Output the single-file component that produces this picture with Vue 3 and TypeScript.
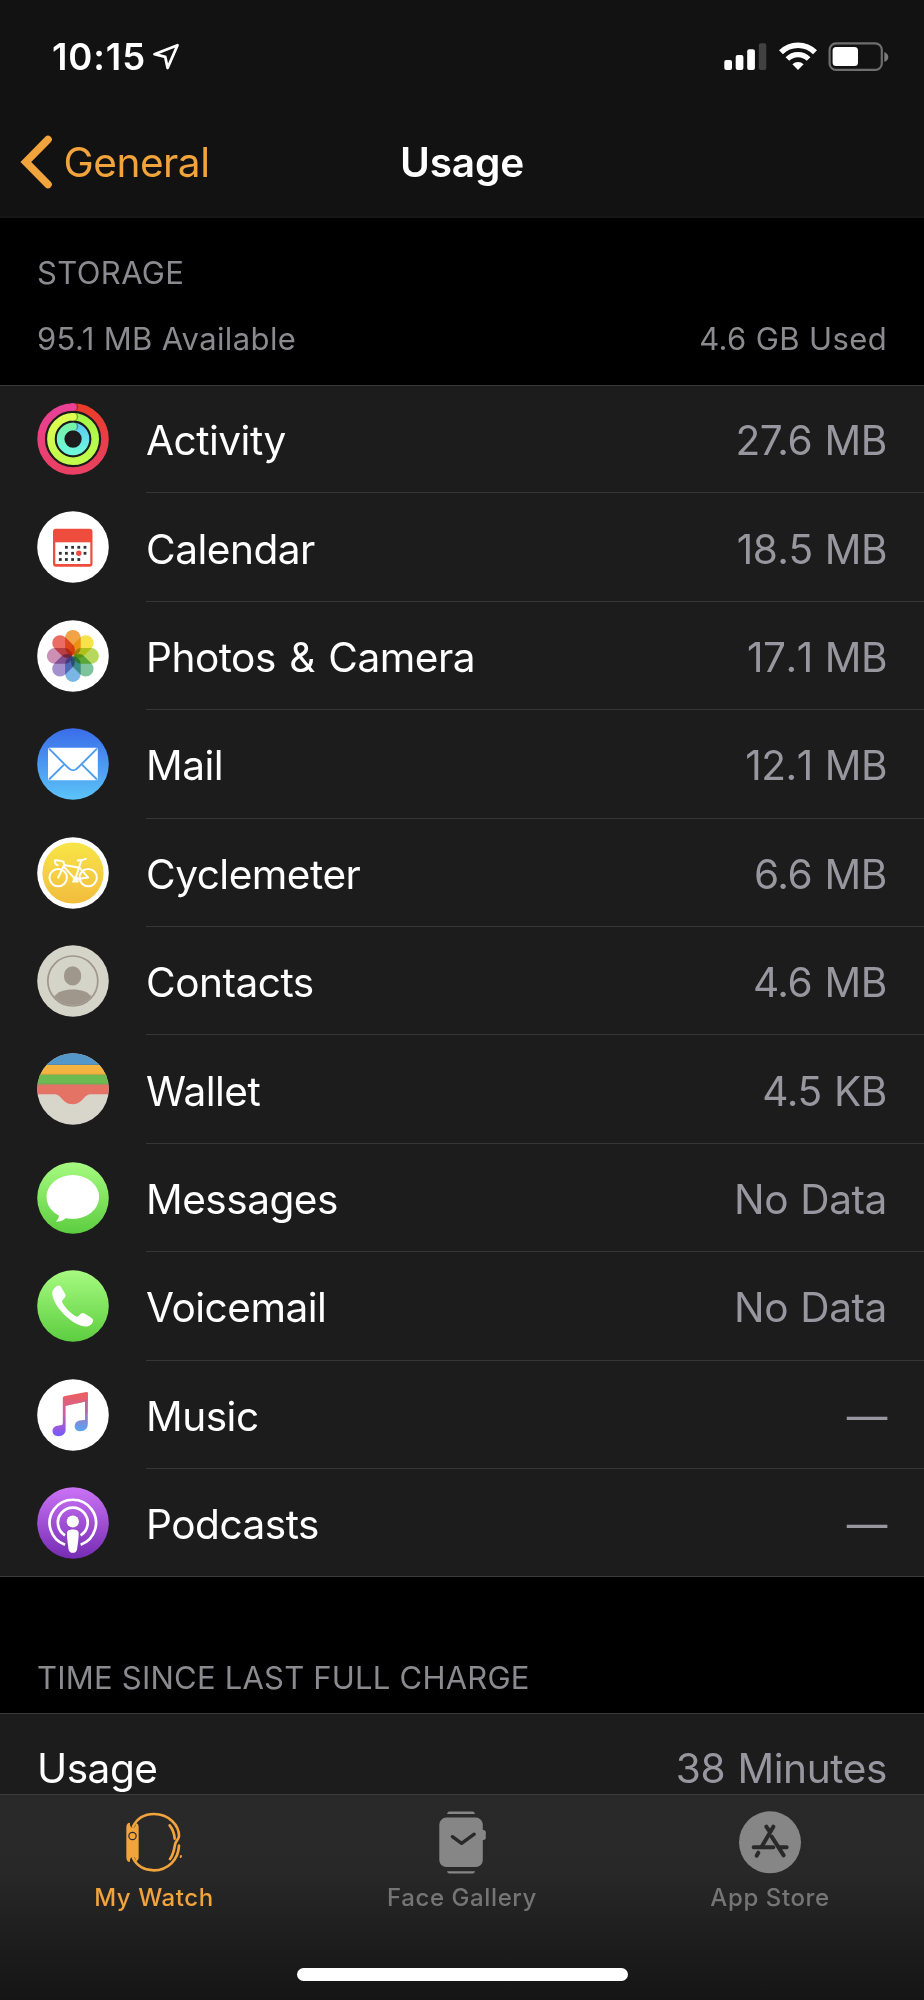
<template>
  <div class="screen">
    <header class="top">
      <div class="status-bar">
        <div class="clock">
          <span class="time">10:15</span>
          <svg class="location" width="28" height="28" viewBox="0 0 28 28">
            <path d="M25.5 2.2 2.5 11.2 13.2 13.8 15.6 25 25.5 2.2Z" />
          </svg>
        </div>
        <div class="indicators">
          <svg width="43" height="30" viewBox="0 0 43 30">
            <rect x="0.3" y="18" width="7.7" height="10" rx="2" fill="#fff" />
            <rect x="11.7" y="13" width="7.7" height="15" rx="2" fill="#fff" />
            <rect x="23.2" y="7.2" width="7.7" height="20.8" rx="2" fill="#fff" />
            <rect x="34.8" y="1.3" width="7.5" height="26.7" rx="2" fill="#414141" />
          </svg>
          <svg width="38" height="30" viewBox="0 0 38 30">
            <path d="M2 10.3A24 24 0 0 1 36 10.3" fill="none" stroke="#fff" stroke-width="5.6" />
            <path d="M8.4 17A14.9 14.9 0 0 1 29.6 17" fill="none" stroke="#fff" stroke-width="5.2" />
            <path d="M13.4 22.2A8 8 0 0 1 24.6 22.2L19 28Z" fill="#fff" />
          </svg>
          <svg width="62" height="30" viewBox="0 0 62 30">
            <rect x="1.6" y="1.3" width="52.2" height="26.6" rx="6.5" fill="none" stroke="#6e6e6e" stroke-width="2.2" />
            <rect x="4.6" y="5" width="25.4" height="19" rx="3.5" fill="#fff" />
            <path d="M56.3 10V20C59 19 60.3 17 60.3 15S59 11 56.3 10Z" fill="#7b7b7b" />
          </svg>
        </div>
      </div>
      <div class="nav-bar">
        <a class="back">
          <svg width="34" height="54" viewBox="0 0 34 54">
            <path d="M29 4.5 6.8 27 29 49.5" />
          </svg>
          <span>General</span>
        </a>
        <h1>Usage</h1>
        <div class="nav-side"></div>
      </div>
    </header>

    <main class="content">
      <div class="section-head">
        <div class="caption">STORAGE</div>
        <div class="totals">
          <span>95.1 MB Available</span>
          <span>4.6 GB Used</span>
        </div>
      </div>

      <ul class="list">
        <li v-for="app in apps" :key="app.id" class="row">
          <svg class="app-icon" viewBox="0 0 72 72">
            <defs>
              <linearGradient :id="`bg-${app.id}`" x1="0" y1="0" x2="0" y2="1">
                <stop offset="0" :stop-color="app.bg[0]" />
                <stop offset="1" :stop-color="app.bg[1]" />
              </linearGradient>
            </defs>
            <circle cx="36" cy="36" r="35.8" :fill="`url(#bg-${app.id})`" />

            <g v-if="app.id === 'activity'" fill="none" stroke-width="7.6">
              <template v-for="ring in rings" :key="ring.r">
                <linearGradient :id="`ring-a-${ring.r}`" gradientUnits="userSpaceOnUse" x1="0" :y1="36 - ring.r" x2="0" :y2="36 + ring.r">
                  <stop offset="0" :stop-color="ring.start" />
                  <stop offset="1" :stop-color="ring.mid" />
                </linearGradient>
                <linearGradient :id="`ring-b-${ring.r}`" gradientUnits="userSpaceOnUse" x1="0" :y1="36 - ring.r" x2="0" :y2="36 + ring.r">
                  <stop offset="0" :stop-color="ring.end" />
                  <stop offset="1" :stop-color="ring.mid" />
                </linearGradient>
                <path :d="`M36 ${36 - ring.r}A${ring.r} ${ring.r} 0 0 1 36 ${36 + ring.r}`" :stroke="`url(#ring-a-${ring.r})`" />
                <circle cx="37.6" :cy="36 - ring.r" r="3.6" fill="#000" fill-opacity="0.3" />
                <path :d="`M36.2 ${36 + ring.r}A${ring.r} ${ring.r} 0 0 1 36 ${36 - ring.r}`" :stroke="`url(#ring-b-${ring.r})`" />
                <circle cx="36" :cy="36 - ring.r" r="3.8" :fill="ring.end" />
              </template>
            </g>

            <g v-else-if="app.id === 'calendar'">
              <rect x="16" y="17.7" width="39.5" height="38" rx="3" fill="#ee4d3d" />
              <rect x="18.3" y="31.3" width="35" height="21.7" fill="#fff" />
              <rect v-for="(d, i) in calendarDots" :key="i" :x="d[0] - 1.4" :y="d[1] - 1.4" width="2.8" height="2.8" fill="#333" />
              <circle cx="41.8" cy="42.3" r="2.7" fill="#ee4d3d" />
            </g>

            <g v-else-if="app.id === 'photos'" class="petals">
              <rect
                v-for="(color, i) in petals"
                :key="color"
                x="28.1"
                y="9.9"
                width="15.6"
                height="25.6"
                rx="7.8"
                :fill="color"
                :transform="`rotate(${i * 45} 35.9 35.9)`"
              />
            </g>

            <g v-else-if="app.id === 'mail'">
              <rect x="11" y="19.7" width="49.8" height="32.5" rx="1.5" fill="#fff" />
              <path
                d="M12 20.7 30.5 39.2C34 43.4 38 43.4 41.5 39.2L60 20.7M12 51.5 26.8 36.8M60 51.5 45.2 36.8"
                fill="none"
                stroke="#4c9df0"
                stroke-width="1.9"
              />
            </g>

            <g v-else-if="app.id === 'cyclemeter'" fill="none" stroke="#fff" stroke-width="2" stroke-linecap="round" stroke-linejoin="round">
              <linearGradient id="cycle-fill" x1="0" y1="0" x2="0" y2="1">
                <stop offset="0" stop-color="#f8e548" />
                <stop offset="1" stop-color="#f2bc3d" />
              </linearGradient>
              <circle cx="36" cy="36" r="30.6" fill="url(#cycle-fill)" stroke="none" />
              <circle cx="21.2" cy="40.6" r="8.7" />
              <circle cx="51.2" cy="40.6" r="8.7" />
              <path d="M21.2 40.6 27.2 28 26.4 24.5C24 24.6 22 22.8 18.5 23.2 17 24 18.5 28 20.6 28.2" />
              <path d="M27.2 28 42.6 30.8M26.8 29.6 38.2 42.2 51.2 40.6 42.6 30.8" />
              <path d="M38.2 42.2 44.4 23.2M40.8 23.5C43 22.6 45.5 23.4 48.8 21.9M36 44.6H41" />
              <circle cx="38.6" cy="42" r="2.2" stroke-width="1.2" />
            </g>

            <g v-else-if="app.id === 'contacts'" fill="#9f968c">
              <circle cx="35.8" cy="36" r="25" fill="none" stroke="#9f968c" stroke-width="1.7" />
              <ellipse cx="35.6" cy="30.9" rx="8.7" ry="9.6" />
              <path d="M17.2 51.8C22.5 42 49 42 54.4 51.8A25 25 0 0 1 17.2 51.8Z" />
            </g>

            <g v-else-if="app.id === 'wallet'">
              <clipPath id="wallet-clip"><circle cx="36" cy="36" r="35.8" /></clipPath>
              <g clip-path="url(#wallet-clip)">
                <rect width="72" height="12" fill="#5498c9" />
                <rect y="11.9" width="72" height="10" fill="#f5b441" />
                <rect y="21.7" width="72" height="10" fill="#6dba51" />
                <path d="M0 31.5H72V41.3H54C46 41.3 46.5 51.2 35.6 51.2 24.7 51.2 25.2 41.3 17.2 41.3H0Z" fill="#e47365" />
                <path d="M0 21.3H72M0 31.1H72M0 11.5H72" stroke="#000" stroke-opacity="0.1" />
              </g>
            </g>

            <g v-else-if="app.id === 'messages'" fill="#fff">
              <ellipse cx="35.8" cy="35" rx="26.3" ry="21.9" />
              <path d="M21.5 51C22.5 54.5 21.5 57.5 18.8 59.4 23.5 60 27.5 57.8 30 55Z" />
            </g>

            <path
              v-else-if="app.id === 'voicemail'"
              d="M15.2 23.5C15 19.6 19 16 22 15.6 23.4 15.6 24 16.8 28.4 24.6 29.8 27.8 24.2 29.6 25.2 32.2 28 37.6 34.2 43.8 39.4 46.6 42 47.4 43.4 41.6 47 43.2 54.4 47.6 56.2 48.8 56.2 50.4 55.8 53.6 52.6 56.6 48.6 56.5 36.5 56.5 16 36.5 15.2 23.5Z"
              fill="#fff"
            />

            <g v-else-if="app.id === 'music'">
              <linearGradient id="note-l" gradientUnits="userSpaceOnUse" x1="26" y1="16" x2="26" y2="56">
                <stop offset="0" stop-color="#ea5f62" />
                <stop offset="0.45" stop-color="#cc62a4" />
                <stop offset="1" stop-color="#7a58fb" />
              </linearGradient>
              <linearGradient id="note-r" gradientUnits="userSpaceOnUse" x1="45" y1="13" x2="45" y2="52">
                <stop offset="0" stop-color="#e35c6c" />
                <stop offset="0.4" stop-color="#b667b4" />
                <stop offset="1" stop-color="#5aa4f2" />
              </linearGradient>
              <path d="M48 22.5V40.9C39.5 40.6 37.7 44.3 37.7 47.2 37.7 50.4 40.2 52.2 43.3 52.2 48 52.2 50.8 49.6 50.8 44.8V13.8L40 15.8V24.4Z" fill="url(#note-r)" />
              <path d="M28.6 27V51C28.6 54.6 25.4 57.2 21.5 57.2 18 57.2 15.5 55.2 15.5 52 15.5 48.8 18 46.6 22 46.4 24.2 46.2 25.8 46.4 25.8 43.8V19.4C25.8 18 26.6 17.4 28 17.1L49.4 13.1C50.3 12.9 50.8 13.2 50.8 14V22L28.6 27Z" fill="url(#note-l)" />
              <path d="M48 22.4V34H50.8V20Z" fill="#c063a0" fill-opacity="0.5" />
            </g>

            <g v-else-if="app.id === 'podcasts'" fill="none" stroke="#fff" stroke-width="2.7">
              <path d="M28 57.8A23.2 23.2 0 1 1 43.6 57.8" />
              <path d="M28 48.3A14.9 14.9 0 1 1 43.6 48.3" />
              <circle cx="35.8" cy="34.5" r="6.1" fill="#fff" stroke="none" />
              <path d="M30 46.2C30 43.6 32.4 42.6 35.8 42.6S41.7 43.6 41.7 46.2C41.7 51 40.8 57.5 40 62.5 39.6 65 38 65.8 35.8 65.8S32 65 31.6 62.5C30.8 57.5 30 51 30 46.2Z" fill="#fff" stroke="none" />
            </g>
          </svg>
          <div class="row-body">
            <span class="name">{{ app.name }}</span>
            <span class="value" :class="{ loose: app.loose }">{{ app.size }}</span>
          </div>
        </li>
      </ul>

      <div class="section-head charge">
        <div class="caption">TIME SINCE LAST FULL CHARGE</div>
      </div>
      <ul class="list">
        <li class="row">
          <div class="row-body">
            <span class="name">Usage</span>
            <span class="value">38 Minutes</span>
          </div>
        </li>
      </ul>
    </main>

    <footer class="tab-bar">
      <div class="tabs">
        <div class="tab active">
          <svg width="62" height="65" viewBox="0 0 186 195">
            <path d="M10 52Q10 38 21 38C18 58 41 58 38 40Q47 40 47 52V142Q47 152 38 154C41 136 18 136 21 156Q10 156 10 142Z" fill="#f1a33c" />
            <circle cx="28.5" cy="78" r="11" fill="#f1a33c" stroke="#292929" stroke-width="3.4" />
            <g fill="none" stroke="#f1a33c" stroke-width="8" stroke-linecap="round">
              <path d="M30 50C42 25 66 12 93 12 138 12 168 46 168 78 168 88 158 92 156 104 153 122 151 134 141 147" />
              <path d="M30 144C42 168 66 181 93 181 134 181 166 150 168 107" />
              <path d="M140 46C148 56 154 70 155 86" />
              <path d="M173 141 174 138" stroke-width="6" />
            </g>
          </svg>
          <span>My Watch</span>
        </div>
        <div class="tab">
          <svg width="50" height="65" viewBox="0 0 50 65">
            <g fill="#868686">
              <path d="M10 3.9C10.6 2 11.5 1.6 13 1.6H35C36.5 1.6 37.4 2 38 3.9Z" />
              <path d="M10 61.2C10.6 63.1 11.5 63.5 13 63.5H35C36.5 63.5 37.4 63.1 38 61.2Z" />
              <rect x="2.3" y="7.6" width="43.5" height="49.5" rx="7" />
              <rect x="42" y="20" width="6.8" height="10" rx="2.5" />
            </g>
            <path d="M15.4 26.7 24.6 33.3 37.2 24.2" fill="none" stroke="#292929" stroke-width="3.4" stroke-linecap="round" stroke-linejoin="round" />
          </svg>
          <span>Face Gallery</span>
        </div>
        <div class="tab">
          <svg width="62" height="65" viewBox="0 -4 186 195">
            <circle cx="93" cy="93" r="93" fill="#868686" />
            <g fill="none" stroke="#292929" stroke-width="12" stroke-linecap="round">
              <path d="M103 46 68 106M82 46 90 58" />
              <path d="M98 76 134 132" />
              <path d="M44 108H103M124 108H143" />
              <path d="M58 124 53 133" />
            </g>
          </svg>
          <span>App Store</span>
        </div>
      </div>
      <div class="home-indicator"></div>
    </footer>
  </div>
</template>

<script setup lang="ts">
interface AppUsage {
  id: string
  name: string
  size: string
  bg: [string, string]
  // no kerning around narrow "1" digits
  loose?: boolean
}

const apps: AppUsage[] = [
  { id: 'activity', name: 'Activity', size: '27.6 MB', bg: ['#1c1c1c', '#1c1c1c'] },
  { id: 'calendar', name: 'Calendar', size: '18.5 MB', bg: ['#ffffff', '#ffffff'], loose: true },
  { id: 'photos', name: 'Photos & Camera', size: '17.1 MB', bg: ['#ffffff', '#ffffff'], loose: true },
  { id: 'mail', name: 'Mail', size: '12.1 MB', bg: ['#3a6cea', '#5cc4f8'], loose: true },
  { id: 'cyclemeter', name: 'Cyclemeter', size: '6.6 MB', bg: ['#ffffff', '#ffffff'] },
  { id: 'contacts', name: 'Contacts', size: '4.6 MB', bg: ['#d5d4c8', '#d5d4c8'] },
  { id: 'wallet', name: 'Wallet', size: '4.5 KB', bg: ['#d8d5cb', '#d8d5cb'] },
  { id: 'messages', name: 'Messages', size: 'No Data', bg: ['#a6fb80', '#5dcd40'] },
  { id: 'voicemail', name: 'Voicemail', size: 'No Data', bg: ['#a6fb80', '#5dcd40'] },
  { id: 'music', name: 'Music', size: '—', bg: ['#ffffff', '#ffffff'] },
  { id: 'podcasts', name: 'Podcasts', size: '—', bg: ['#cb73f6', '#752cb3'] },
]

const rings = [
  { r: 32, start: '#ea3c2a', mid: '#ea4064', end: '#ea4096' },
  { r: 22.2, start: '#a6f848', mid: '#c2fb4c', end: '#e0fd50' },
  { r: 12.5, start: '#5bcdf2', mid: '#6ff8dc', end: '#74f4a8' },
]

// clockwise from the top
const petals = ['#f2a345', '#f6e24b', '#b7d85c', '#7dc39b', '#79b6e4', '#a390cc', '#cc90b6', '#e96d62']

const calendarDots = [
  [29.4, 36.3], [35.6, 36.3], [41.8, 36.3], [48, 36.3],
  [23.3, 42.3], [29.4, 42.3], [35.6, 42.3], [48, 42.3],
  [23.3, 48.5], [29.4, 48.5], [35.6, 48.5], [41.8, 48.5],
]
</script>

<style>
body {
  margin: 0;
  background: #000;
}
</style>

<style scoped>
.screen {
  width: 924px;
  height: 2000px;
  display: flex;
  flex-direction: column;
  overflow: hidden;
  background: #000;
  color: #fff;
  font-family: Inter, 'Liberation Sans', sans-serif;
  font-size: 40.6px;
}
svg {
  display: block;
  flex: none;
}

/* ===== header ===== */
.top {
  flex: none;
  height: 216px;
  background: #121212;
  border-bottom: 2px solid #161616;
}
.status-bar {
  display: flex;
  justify-content: space-between;
  align-items: center;
  height: 113px;
  padding: 0 34px 0 52px;
}
.clock {
  display: flex;
  align-items: center;
  gap: 6px;
}
.time {
  font-size: 36.5px;
  font-weight: 600;
  letter-spacing: 0.9px;
}
.location path {
  fill: none;
  stroke: #fff;
  stroke-width: 2.8;
  stroke-linejoin: round;
}
.indicators {
  display: flex;
  gap: 11.5px;
}
.nav-bar {
  display: flex;
  align-items: center;
  height: 98px;
  padding: 0 19px;
}
.back,
.nav-side {
  flex: 1;
}
.back {
  display: flex;
  align-items: center;
  gap: 10.5px;
  color: #f1a33c;
  letter-spacing: -0.5px;
}
.back path {
  fill: none;
  stroke: #f1a33c;
  stroke-width: 7.6;
  stroke-linecap: round;
}
h1 {
  margin: 0;
  font-size: 40.6px;
  font-weight: 600;
  letter-spacing: -0.15px;
}

/* ===== lists ===== */
.content {
  flex: 1;
  min-height: 0;
  overflow: hidden;
}
.section-head {
  padding: 35px 37px 26px;
  font-size: 31px;
  line-height: 40px;
  letter-spacing: 0.38px;
  color: #8a8a8f;
}
.section-head.charge {
  padding: 81px 37px 14.6px;
  letter-spacing: 0.22px;
}
.totals {
  display: flex;
  justify-content: space-between;
  margin-top: 26px;
}
.list {
  display: flow-root;
  margin: 0;
  padding: 0;
  list-style: none;
  background: #1c1c1c;
  box-shadow: inset 0 1px #3a3a3b, inset 0 -1px #3a3a3b;
}
.row {
  display: flex;
  align-items: center;
  gap: 37px;
  height: 108.4px;
  padding-left: 37px;
}
.app-icon {
  width: 72px;
  height: 72px;
  margin-top: -0.4px;
}
.petals {
  isolation: isolate;
}
.petals rect {
  mix-blend-mode: multiply;
}
.row-body {
  flex: 1;
  display: flex;
  align-items: center;
  justify-content: space-between;
  box-sizing: border-box;
  height: 100%;
  padding: 4px 37px 0 0;
  border-bottom: 1px solid #363637;
}
.row:last-child .row-body {
  border-bottom-color: transparent;
}
.name {
  letter-spacing: -0.5px;
  word-spacing: 2.5px;
}
.value {
  color: #98979f;
  letter-spacing: -0.4px;
  word-spacing: 1.2px;
}
.value.loose {
  font-kerning: none;
  letter-spacing: -0.5px;
}

/* ===== tab bar ===== */
.tab-bar {
  flex: none;
  display: flex;
  flex-direction: column;
  align-items: center;
  box-sizing: border-box;
  height: 206px;
  border-top: 1px solid #3a3a3a;
  background: linear-gradient(#292929 0%, #282828 38%, #1c1c1c 75%, #151515 100%);
}
.tabs {
  display: flex;
  width: 100%;
  height: 173px;
}
.tab {
  flex: 1;
  display: flex;
  flex-direction: column;
  align-items: center;
  padding-top: 15px;
  font-size: 24px;
  font-weight: 500;
  line-height: 30px;
  letter-spacing: 0.6px;
  color: #757575;
}
.tab span {
  margin-top: 8px;
}
.tab.active {
  color: #f1a33c;
}
.home-indicator {
  width: 331px;
  height: 12.5px;
  border-radius: 7px;
  background: #fff;
}
</style>
